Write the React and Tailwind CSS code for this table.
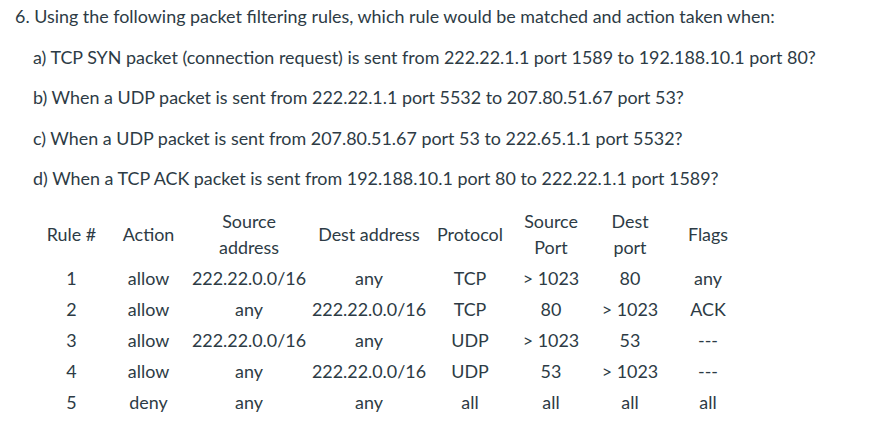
import React from "react";

const rows = [
  ["1", "allow", "222.22.0.0/16", "any", "TCP", "> 1023", "80", "any"],
  ["2", "allow", "any", "222.22.0.0/16", "TCP", "80", "> 1023", "ACK"],
  ["3", "allow", "222.22.0.0/16", "any", "UDP", "> 1023", "53", "---"],
  ["4", "allow", "any", "222.22.0.0/16", "UDP", "53", "> 1023", "---"],
  ["5", "deny", "any", "any", "all", "all", "all", "all"],
];

const headers = [
  ["Rule #"],
  ["Action"],
  ["Source", "address"],
  ["Dest address"],
  ["Protocol"],
  ["Source", "Port"],
  ["Dest", "port"],
  ["Flags"],
];

const gridCols =
  "grid grid-cols-[77px_77px_124px_116px_86px_76px_82px_74px]";

export default function App() {
  return (
    <div
      className="w-[884px] h-[430px] bg-white text-[#2d3b45] text-[17.9px] overflow-hidden"
      style={{ fontFamily: "Lato, 'Open Sans', sans-serif" }}
    >
      <div className="pt-[4px] pl-[15px] flex flex-col gap-[16.5px] leading-[24px]">
        <p className="whitespace-nowrap">
          6. Using the following packet filtering rules, which rule would be
          matched and action taken when:
        </p>
        <div className="pl-[18px] flex flex-col gap-[16.5px]">
          <p className="whitespace-nowrap">
            a) TCP SYN packet (connection request) is sent from 222.22.1.1 port
            1589 to 192.188.10.1 port 80?
          </p>
          <p className="whitespace-nowrap">
            b) When a UDP packet is sent from 222.22.1.1 port 5532 to
            207.80.51.67 port 53?
          </p>
          <p className="whitespace-nowrap">
            c) When a UDP packet is sent from 207.80.51.67 port 53 to
            222.65.1.1 port 5532?
          </p>
          <p className="whitespace-nowrap">
            d) When a TCP ACK packet is sent from 192.188.10.1 port 80 to
            222.22.1.1 port 1589?
          </p>
        </div>
      </div>

      <div className="ml-[33px] mt-[18px]">
        <div className={`${gridCols} h-[52px] leading-[26px]`}>
          {headers.map((h, i) => (
            <div
              key={i}
              className="flex flex-col items-center justify-center whitespace-nowrap"
            >
              {h.map((l, j) => (
                <span key={j}>{l}</span>
              ))}
            </div>
          ))}
        </div>
        <div className="mt-[3px] flex flex-col">
          {rows.map((r, i) => (
            <div key={i} className={`${gridCols} h-[31px] leading-[31px]`}>
              {r.map((c, j) => (
                <div key={j} className="flex justify-center whitespace-nowrap">
                  {c}
                </div>
              ))}
            </div>
          ))}
        </div>
      </div>
    </div>
  );
}
